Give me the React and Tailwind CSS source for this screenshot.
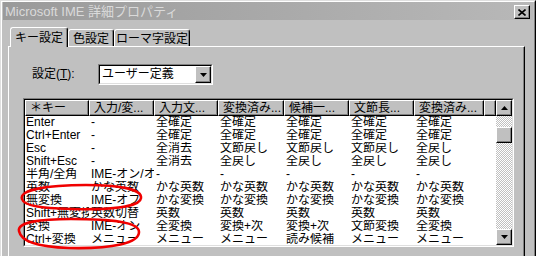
import React from 'react';

const COLS = [64, 65, 64, 66, 65, 65, 70, 12];

const HEADERS = ['＊キー', '入力/変...', '入力文...', '変換済み...', '候補一...', '文節長...', '変換済み...', ''];

const ROWS = [
  ['Enter', '-', '全確定', '全確定', '全確定', '全確定', '全確定'],
  ['Ctrl+Enter', '-', '全確定', '全確定', '全確定', '全確定', '全確定'],
  ['Esc', '-', '全消去', '文節戻し', '文節戻し', '文節戻し', '全戻し'],
  ['Shift+Esc', '-', '全消去', '全戻し', '全戻し', '全戻し', '全戻し'],
  ['半角/全角', 'IME-オン/オフ', '-', '-', '-', '-', '-'],
  ['英数', 'かな英数', 'かな英数', 'かな英数', 'かな英数', 'かな英数', 'かな英数'],
  ['無変換', 'IME-オフ', 'かな変換', 'かな変換', 'かな変換', 'かな変換', 'かな変換'],
  ['Shift+無変換', '英数切替', '英数', '英数', '英数', '英数', '英数'],
  ['変換', 'IME-オン', '全変換', '変換+次', '変換+次', '文節変換', '全変換'],
  ['Ctrl+変換', 'メニュー', 'メニュー', 'メニュー', '読み候補', 'メニュー', 'メニュー'],
];

// raised 3d edge used by buttons
const raised =
  'bg-[#c0c0c0] border-t border-l border-t-white border-l-white border-r border-b border-r-black border-b-black shadow-[inset_-1px_-1px_#808080]';

function Arrow({ dir }) {
  return (
    <svg width="7" height="4" viewBox="0 0 7 4">
      {dir === 'up' ? <path d="M3.5 0 L7 4 L0 4 Z" fill="#000" /> : <path d="M0 0 L7 0 L3.5 4 Z" fill="#000" />}
    </svg>
  );
}

function Tab({ label, selected, w }) {
  return (
    <div
      className={
        'flex justify-center bg-[#c0c0c0] border-t border-l border-t-white border-l-white border-r border-r-black shadow-[inset_-1px_0_#808080] rounded-t-[3px] ' +
        (selected ? 'relative z-10 h-[20px] -mb-px pt-[4px]' : 'h-[17px] pt-[3px]')
      }
      style={{ width: w }}
    >
      <span className="leading-[13px]">{label}</span>
    </div>
  );
}

export default function App() {
  return (
    <div className="relative w-[536px] h-[256px] overflow-hidden bg-[#c0c0c0] text-black text-[12px] font-['Liberation_Sans','Noto_Sans_CJK_JP',sans-serif] border-t border-l border-t-[#dfdfdf] border-l-[#dfdfdf] border-r border-r-black">
      <div className="flex flex-col h-full border-t border-l border-white border-r border-r-[#808080] px-px">
        {/* title bar */}
        <div className="h-[18px] flex items-center justify-between bg-gradient-to-r from-[#9a9a9a] to-[#b8b8b8] pl-[2px] pr-[3px]">
          <span className="text-[#dadada] text-[13px] leading-[15px]">Microsoft IME 詳細プロパティ</span>
          <div className={'w-[16px] h-[14px] flex items-center justify-center mt-[2px] ' + raised}>
            <svg width="8" height="7" viewBox="0 0 8 7">
              <path d="M0.5 0.5 L7.5 6.5 M7.5 0.5 L0.5 6.5" stroke="#000" strokeWidth="1.6" />
            </svg>
          </div>
        </div>

        {/* tabs */}
        <div className="h-[26px] flex items-end pl-[7px]">
          <Tab label="キー設定" selected w={58} />
          <Tab label="色設定" w={46} />
          <Tab label="ローマ字設定" w={76} />
        </div>

        {/* tab page */}
        <div className="flex-1 ml-[5px] mr-[8px] border-t border-l border-white border-r border-r-black shadow-[inset_-1px_0_#808080] pl-[14px]">
          <div className="mt-[17px] h-[21px] flex items-center pl-[9px]">
            <span className="w-[66px] leading-[13px]">
              設定(<span className="underline">T</span>):
            </span>
            <div className="w-[115px] h-[21px] border-t border-l border-t-[#808080] border-l-[#808080] border-b border-r border-b-white border-r-white">
              <div className="h-full flex items-center bg-white border-t border-l border-t-black border-l-black border-b border-r border-b-[#dfdfdf] border-r-[#dfdfdf]">
                <span className="flex-1 pl-[2px] leading-[13px]">ユーザー定義</span>
                <div className={'w-[16px] h-[17px] flex items-center justify-center ' + raised}>
                  <Arrow dir="down" />
                </div>
              </div>
            </div>
          </div>

          {/* list view */}
          <div className="mt-[13px] w-[491px] h-[149px] border-t border-l border-t-[#808080] border-l-[#808080] border-b border-r border-b-white border-r-white">
            <div className="h-full flex bg-white border-t border-l border-t-black border-l-black border-b border-r border-b-[#dfdfdf] border-r-[#dfdfdf] overflow-hidden">
              <div className="w-[471px] flex flex-col overflow-hidden">
                <div className="flex h-[16px] shrink-0">
                  {HEADERS.map((h, i) => (
                    <div
                      key={i}
                      className={'shrink-0 flex items-center pl-[4px] whitespace-nowrap overflow-hidden leading-[13px] ' + raised}
                      style={{ width: COLS[i] }}
                    >
                      {h}
                    </div>
                  ))}
                </div>
                {ROWS.map((r, ri) => (
                  <div key={ri} className="flex h-[13px] shrink-0">
                    {r.map((c, ci) => (
                      <div
                        key={ci}
                        className={'shrink-0 whitespace-nowrap overflow-hidden leading-[13px] ' + (ci === 0 ? 'pl-px' : 'pl-[2px]')}
                        style={{ width: COLS[ci] }}
                      >
                        {c}
                      </div>
                    ))}
                  </div>
                ))}
              </div>

              {/* scrollbar */}
              <div className="w-[16px] flex flex-col bg-[image:repeating-conic-gradient(#c0c0c0_0%_25%,#ffffff_0%_50%)] bg-[length:2px_2px]">
                <div className={'h-[16px] shrink-0 flex items-center justify-center ' + raised}>
                  <Arrow dir="up" />
                </div>
                <div className="flex-1">
                  <div className={'mt-[11px] h-[16px] ' + raised} />
                </div>
                <div className={'h-[16px] shrink-0 flex items-center justify-center ' + raised}>
                  <Arrow dir="down" />
                </div>
              </div>
            </div>
          </div>
        </div>
      </div>

      {/* red annotation marks */}
      <svg className="absolute left-0 top-0 pointer-events-none" width="536" height="256">
        <path
          d="M21 198 C18 189 45 184 85 184 C118 184 141 188 140 197 C139 206 110 209 70 208 C40 207 23 205 21 198 Z"
          fill="none"
          stroke="#f00000"
          strokeWidth="2.6"
        />
        <path
          d="M18 230 C16 221 40 218 70 218 C110 218 138 221 138 231 C138 242 112 248 68 247 C38 246 20 241 18 230 Z"
          fill="none"
          stroke="#f00000"
          strokeWidth="2.6"
        />
      </svg>
    </div>
  );
}
